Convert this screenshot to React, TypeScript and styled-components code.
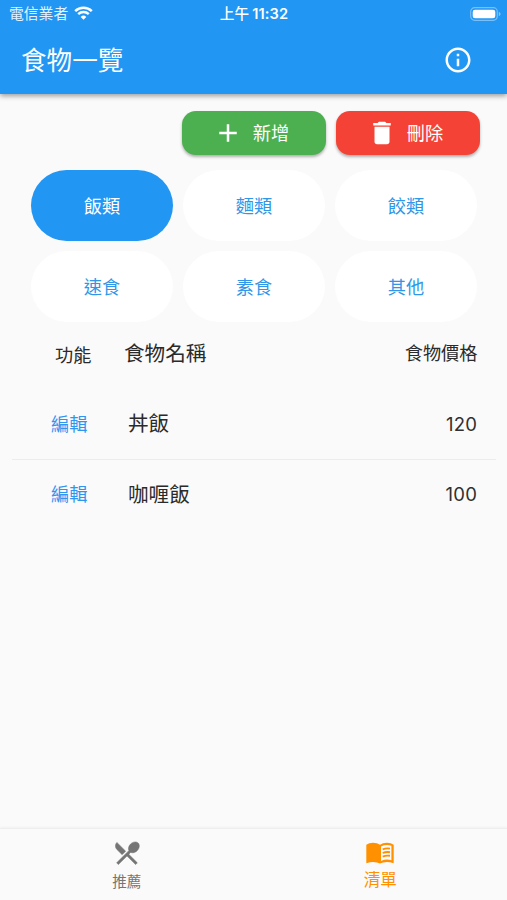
import React from 'react';
import styled, { createGlobalStyle } from 'styled-components';
import { MdAdd, MdDelete, MdInfoOutline, MdRestaurantMenu } from 'react-icons/md';

const GlobalStyle = createGlobalStyle`
  * { box-sizing: border-box; }
  body { margin: 0; background: #fafafa; }
  button { font: inherit; border: 0; padding: 0; background: none; color: inherit; }
  svg { display: block; flex: none; }
`;

const Screen = styled.div`
  width: 507px;
  height: 900px;
  display: flex;
  flex-direction: column;
  overflow: hidden;
  background: #fafafa;
  color: #2a2a2a;
  font-family: Inter, 'Noto Sans CJK TC', sans-serif;
  font-size: 18.2px;
  line-height: 1;
  white-space: nowrap;
`;

const Header = styled.header`
  height: 94px;
  flex: none;
  background: #2196f3;
  color: #fff;
  box-shadow: 0 2px 5px rgba(0, 0, 0, 0.38);
`;

const StatusBar = styled.div`
  height: 27px;
  display: grid;
  grid-template-columns: 1fr auto 1fr;
  align-items: center;
  padding: 0 6px 0 9px;
`;

const Carrier = styled.div`
  display: flex;
  align-items: center;
  gap: 6px;
  font-size: 14.8px;
  color: #e3f2fe;
`;

const CarrierName = styled.span`
  padding-top: 2px;
`;

const Clock = styled.div`
  font-size: 14.6px;
  font-weight: 600;
  letter-spacing: 0.1px;
  display: flex;
  gap: 3px;
  padding-top: 2px;
  margin-right: 2px;
`;

const ClockPeriod = styled.span`
  font-weight: 500;
`;

const BatterySlot = styled.div`
  justify-self: end;
`;

const TitleBar = styled.div`
  height: 66px;
  display: flex;
  align-items: center;
  justify-content: space-between;
  padding: 0 34px 0 21px;
`;

const Title = styled.h1`
  margin: 0;
  padding-top: 1.5px;
  font-size: 25.6px;
  font-weight: 400;
`;

const Content = styled.main`
  flex: 1;
  display: flex;
  flex-direction: column;
`;

const Actions = styled.div`
  display: flex;
  justify-content: flex-end;
  gap: 10px;
  padding: 17px 27px 0 0;
`;

const ActionButton = styled.button<{ $color: string }>`
  width: 144px;
  height: 44px;
  display: flex;
  align-items: center;
  justify-content: center;
  gap: 10px;
  padding: 0 6px 0 0;
  border-radius: 14px;
  background: ${(p) => p.$color};
  color: #fff;
  box-shadow: 0 2px 3px rgba(0, 0, 0, 0.3);
`;

const ActionLabel = styled.span`
  padding-top: 1px;
`;

const Categories = styled.div`
  display: grid;
  grid-template-columns: repeat(3, 142px);
  grid-auto-rows: 71px;
  gap: 10px;
  padding: 14.5px 0 0 31px;
`;

const Category = styled.button<{ $active: boolean }>`
  border-radius: 36px;
  padding-top: 1.5px;
  background: ${(p) => (p.$active ? '#2196f3' : '#fff')};
  color: ${(p) => (p.$active ? '#fff' : '#2f96e8')};
`;

const Table = styled.div`
  margin: 0 11px 0 12px;
`;

const TableHead = styled.div`
  height: 67.5px;
  display: grid;
  grid-template-columns: 69px 1fr auto;
  align-items: center;
  padding: 0 18.5px 4px 43px;
`;

const HeadLabel = styled.span`
  padding-top: 3px;
`;

const Name = styled.span`
  padding-top: 1.5px;
  font-size: 20.6px;
`;

const Row = styled.div`
  height: 70px;
  display: grid;
  grid-template-columns: 77px 1fr auto;
  align-items: center;
  padding: 0 19px 0 39px;
  & + & { border-top: 1px solid #ececec; }
`;

const EditButton = styled.button`
  text-align: left;
  color: #2f96f0;
`;

const Price = styled.span`
  font-size: 18.5px;
  letter-spacing: 0.2px;
  color: #303030;
`;

const BottomNav = styled.nav`
  height: 72px;
  flex: none;
  display: grid;
  grid-template-columns: 1fr 1fr;
  border-top: 1px solid #eee;
  box-shadow: 0 -1px 2px rgba(0, 0, 0, 0.04);
`;

const NavItem = styled.button<{ $active: boolean }>`
  display: flex;
  flex-direction: column;
  align-items: center;
  padding-top: 9px;
  gap: ${(p) => (p.$active ? '4px' : '7px')};
  font-size: ${(p) => (p.$active ? '16.6px' : '14.6px')};
  color: ${(p) => (p.$active ? '#ff9100' : '#757575')};
`;

const UtensilsIcon = styled(MdRestaurantMenu)`
  path:not([fill='none']) {
    stroke: currentColor;
    stroke-width: 0.4px;
  }
  path[fill='none'] {
    stroke: none;
  }
`;

const WifiIcon = () => (
  <svg width="19" height="14" viewBox="0 0 19 14" fill="none" stroke="#fff" strokeWidth="2.5">
    <path d="M1.2 5.1a12 12 0 0 1 16.6 0" />
    <path d="M4.2 8.2a7.7 7.7 0 0 1 10.6 0" />
    <path d="M9.5 13.7 6.7 10.9a4 4 0 0 1 5.6 0Z" fill="#fff" stroke="none" />
  </svg>
);

const BatteryIcon = () => (
  <svg width="31" height="14" viewBox="0 0 31 14">
    <rect x="0.7" y="0.7" width="26.6" height="12.6" rx="4" fill="none" stroke="#fff" strokeOpacity="0.4" strokeWidth="1.2" />
    <rect x="2.7" y="2.7" width="22.6" height="8.6" rx="2.3" fill="#fff" />
    <path d="M28.8 4.8q1.8.7 1.8 2.2t-1.8 2.2Z" fill="#fff" fillOpacity="0.45" />
  </svg>
);

const BookIcon = () => (
  <svg width="30" height="30" viewBox="0 0 30 30" fill="none">
    <path
      d="M1.3 6.7Q4 4.7 8 4.7Q12.3 4.7 15 6.7Q17.7 4.7 22 4.7Q26 4.7 28.7 6.7V24.5Q28.7 25.4 27.8 25.1Q25.2 24 22 24Q17.8 24 15 25.6Q12.2 24 8 24Q4.8 24 2.2 25.1Q1.3 25.4 1.3 24.5Z"
      fill="currentColor"
    />
    <path d="M16 8.5Q18.8 7.1 22 7.1Q24.5 7.1 26.4 7.8V22.2Q24.4 21.6 22 21.6Q18.8 21.6 16 23Z" fill="#fafafa" />
    <path
      d="M17.7 11.4Q21 10 25 10.6M17.7 15Q21 13.6 25 14.2M17.7 18.6Q21 17.2 25 17.8"
      stroke="currentColor"
      strokeWidth="1.9"
    />
  </svg>
);

const categories = ['飯類', '麵類', '餃類', '速食', '素食', '其他'];
const foods = [
  { name: '丼飯', price: 120 },
  { name: '咖喱飯', price: 100 },
];

export default function App() {
  return (
    <>
      <GlobalStyle />
      <Screen lang="zh-Hant">
        <Header>
          <StatusBar>
            <Carrier><CarrierName>電信業者</CarrierName><WifiIcon /></Carrier>
            <Clock><ClockPeriod>上午</ClockPeriod>11:32</Clock>
            <BatterySlot><BatteryIcon /></BatterySlot>
          </StatusBar>
          <TitleBar>
            <Title>食物一覽</Title>
            <MdInfoOutline size={30} />
          </TitleBar>
        </Header>
        <Content>
          <Actions>
            <ActionButton $color="#4caf50"><MdAdd size={30} /><ActionLabel>新增</ActionLabel></ActionButton>
            <ActionButton $color="#f44336"><MdDelete size={30} /><ActionLabel>刪除</ActionLabel></ActionButton>
          </Actions>
          <Categories>
            {categories.map((label, i) => (
              <Category key={label} $active={i === 0}>{label}</Category>
            ))}
          </Categories>
          <Table>
            <TableHead>
              <HeadLabel>功能</HeadLabel>
              <Name>食物名稱</Name>
              <span>食物價格</span>
            </TableHead>
            {foods.map((food) => (
              <Row key={food.name}>
                <EditButton>編輯</EditButton>
                <Name>{food.name}</Name>
                <Price>{food.price}</Price>
              </Row>
            ))}
          </Table>
        </Content>
        <BottomNav>
          <NavItem $active={false}><UtensilsIcon size={30} />推薦</NavItem>
          <NavItem $active><BookIcon />清單</NavItem>
        </BottomNav>
      </Screen>
    </>
  );
}
